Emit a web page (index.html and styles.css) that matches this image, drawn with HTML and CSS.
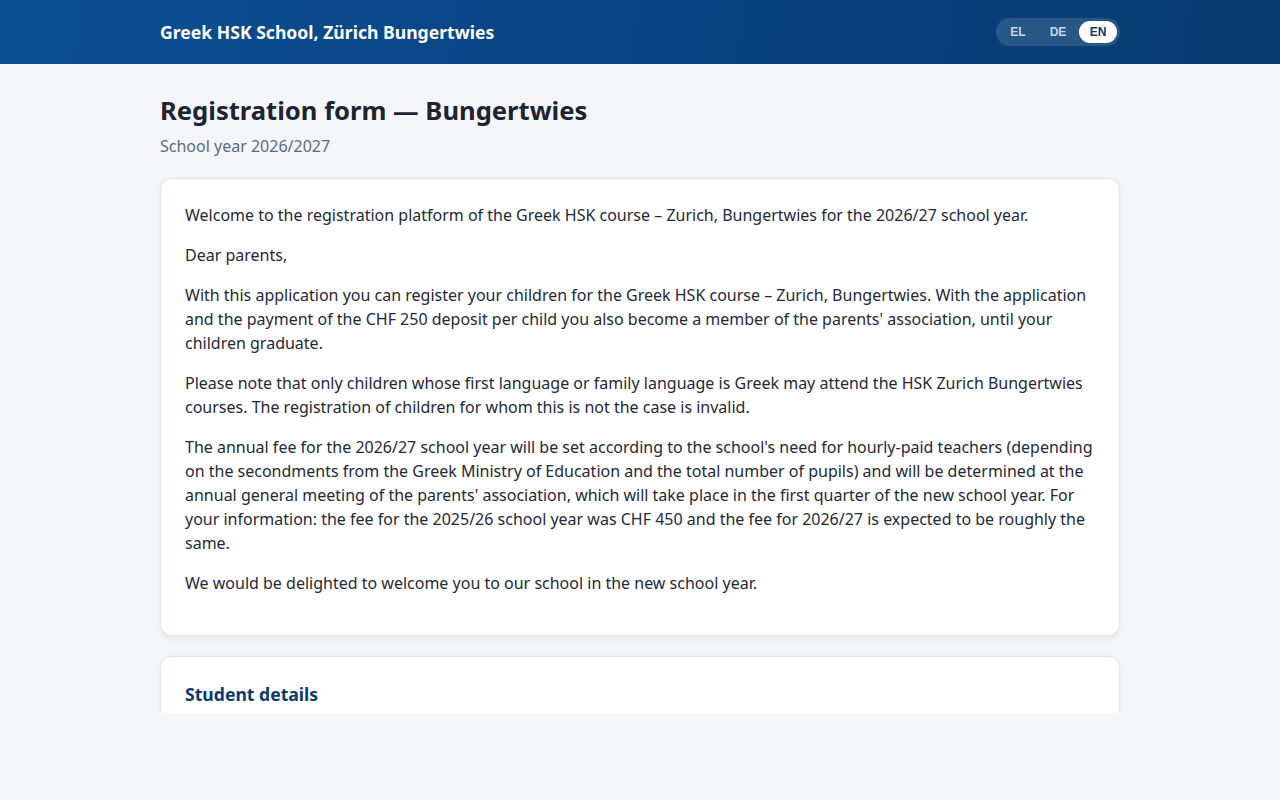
FILE: index.html
```html
<!DOCTYPE html>
<html lang="en">
<head>
<meta charset="utf-8">
<title>Registration form — Bungertwies</title>
<link rel="stylesheet" href="styles.css">
</head>
<body>
<div class="app">
  <header class="topbar">
    <div class="topbar-inner">
      <div class="brand">Greek HSK School, Zürich Bungertwies</div>
      <div class="lang">
        <button class="lang-btn">EL</button>
        <button class="lang-btn">DE</button>
        <button class="lang-btn active">EN</button>
      </div>
    </div>
  </header>
  <main class="main">
    <div class="container">
      <h1 class="title">Registration form — Bungertwies</h1>
      <p class="subtitle">School year 2026/2027</p>
      <section class="card intro">
        <p>Welcome to the registration platform of the Greek HSK course – Zurich, Bungertwies for the 2026/27 school year.</p>
        <p>Dear parents,</p>
        <p>With this application you can register your children for the Greek HSK course – Zurich, Bungertwies. With the application and the payment of the CHF 250 deposit per child you also become a member of the parents' association, until your children graduate.</p>
        <p>Please note that only children whose first language or family language is Greek may attend the HSK Zurich Bungertwies courses. The registration of children for whom this is not the case is invalid.</p>
        <p>The annual fee for the 2026/27 school year will be set according to the school's need for hourly-paid teachers (depending on the secondments from the Greek Ministry of Education and the total number of pupils) and will be determined at the annual general meeting of the parents' association, which will take place in the first quarter of the new school year. For your information: the fee for the 2025/26 school year was CHF 450 and the fee for 2026/27 is expected to be roughly the same.</p>
        <p>We would be delighted to welcome you to our school in the new school year.</p>
      </section>
      <section class="card student">
        <h2 class="section-title">Student details</h2>
      </section>
    </div>
  </main>
  <footer class="footer"></footer>
</div>
</body>
</html>
```

FILE: styles.css
```css
* { box-sizing: border-box; }
html, body { margin: 0; padding: 0; }
body {
  background: #f4f6fa;
  font-family: "Noto Sans", "Open Sans", sans-serif;
  color: #1f2937;
  font-size: 16px;
  line-height: 24px;
}
.app {
  height: 800px;
  display: flex;
  flex-direction: column;
}
.topbar {
  height: 64px;
  flex: none;
  background: linear-gradient(100deg, #0c4f94 0%, #0a4484 45%, #083a70 100%);
  color: #fff;
}
.topbar-inner {
  width: 960px;
  margin: 0 auto;
  height: 100%;
  display: flex;
  align-items: center;
  justify-content: space-between;
}
.brand {
  font-size: 17.6px;
  font-weight: 700;
}
.lang {
  display: flex;
  gap: 2px;
  padding: 3px;
  border-radius: 999px;
  background: rgba(255, 255, 255, 0.13);
}
.lang-btn {
  border: 0;
  background: transparent;
  color: #c9d6e8;
  font-family: "Liberation Sans", Arial, sans-serif;
  font-weight: 700;
  font-size: 12px;
  height: 22px;
  width: 38px;
  padding: 0;
  border-radius: 999px;
  cursor: pointer;
}
.lang-btn.active {
  background: #fff;
  color: #0b3a6e;
}
.main {
  flex: none;
  height: 649px;
  overflow: hidden;
}
.footer { flex: 1; }
.container {
  width: 960px;
  margin: 0 auto;
  padding-top: 31px;
}
.title {
  margin: 0;
  font-size: 25.6px;
  line-height: 31px;
  font-weight: 700;
  color: #1c2430;
}
.subtitle {
  margin: 8px 0 20px;
  color: #5b6b80;
  font-size: 16px;
}
.card {
  background: #fff;
  border: 1px solid #e1e5ec;
  border-radius: 12px;
  box-shadow: 0 2px 6px rgba(20, 40, 80, 0.08);
  padding: 24px;
  margin-bottom: 20px;
}
.card p {
  margin: 0 0 16px;
}
.student {
  min-height: 200px;
}
.section-title {
  margin: 0 0 16px;
  font-size: 17.6px;
  line-height: 26px;
  font-weight: 700;
  color: #0b3a6e;
}
```
